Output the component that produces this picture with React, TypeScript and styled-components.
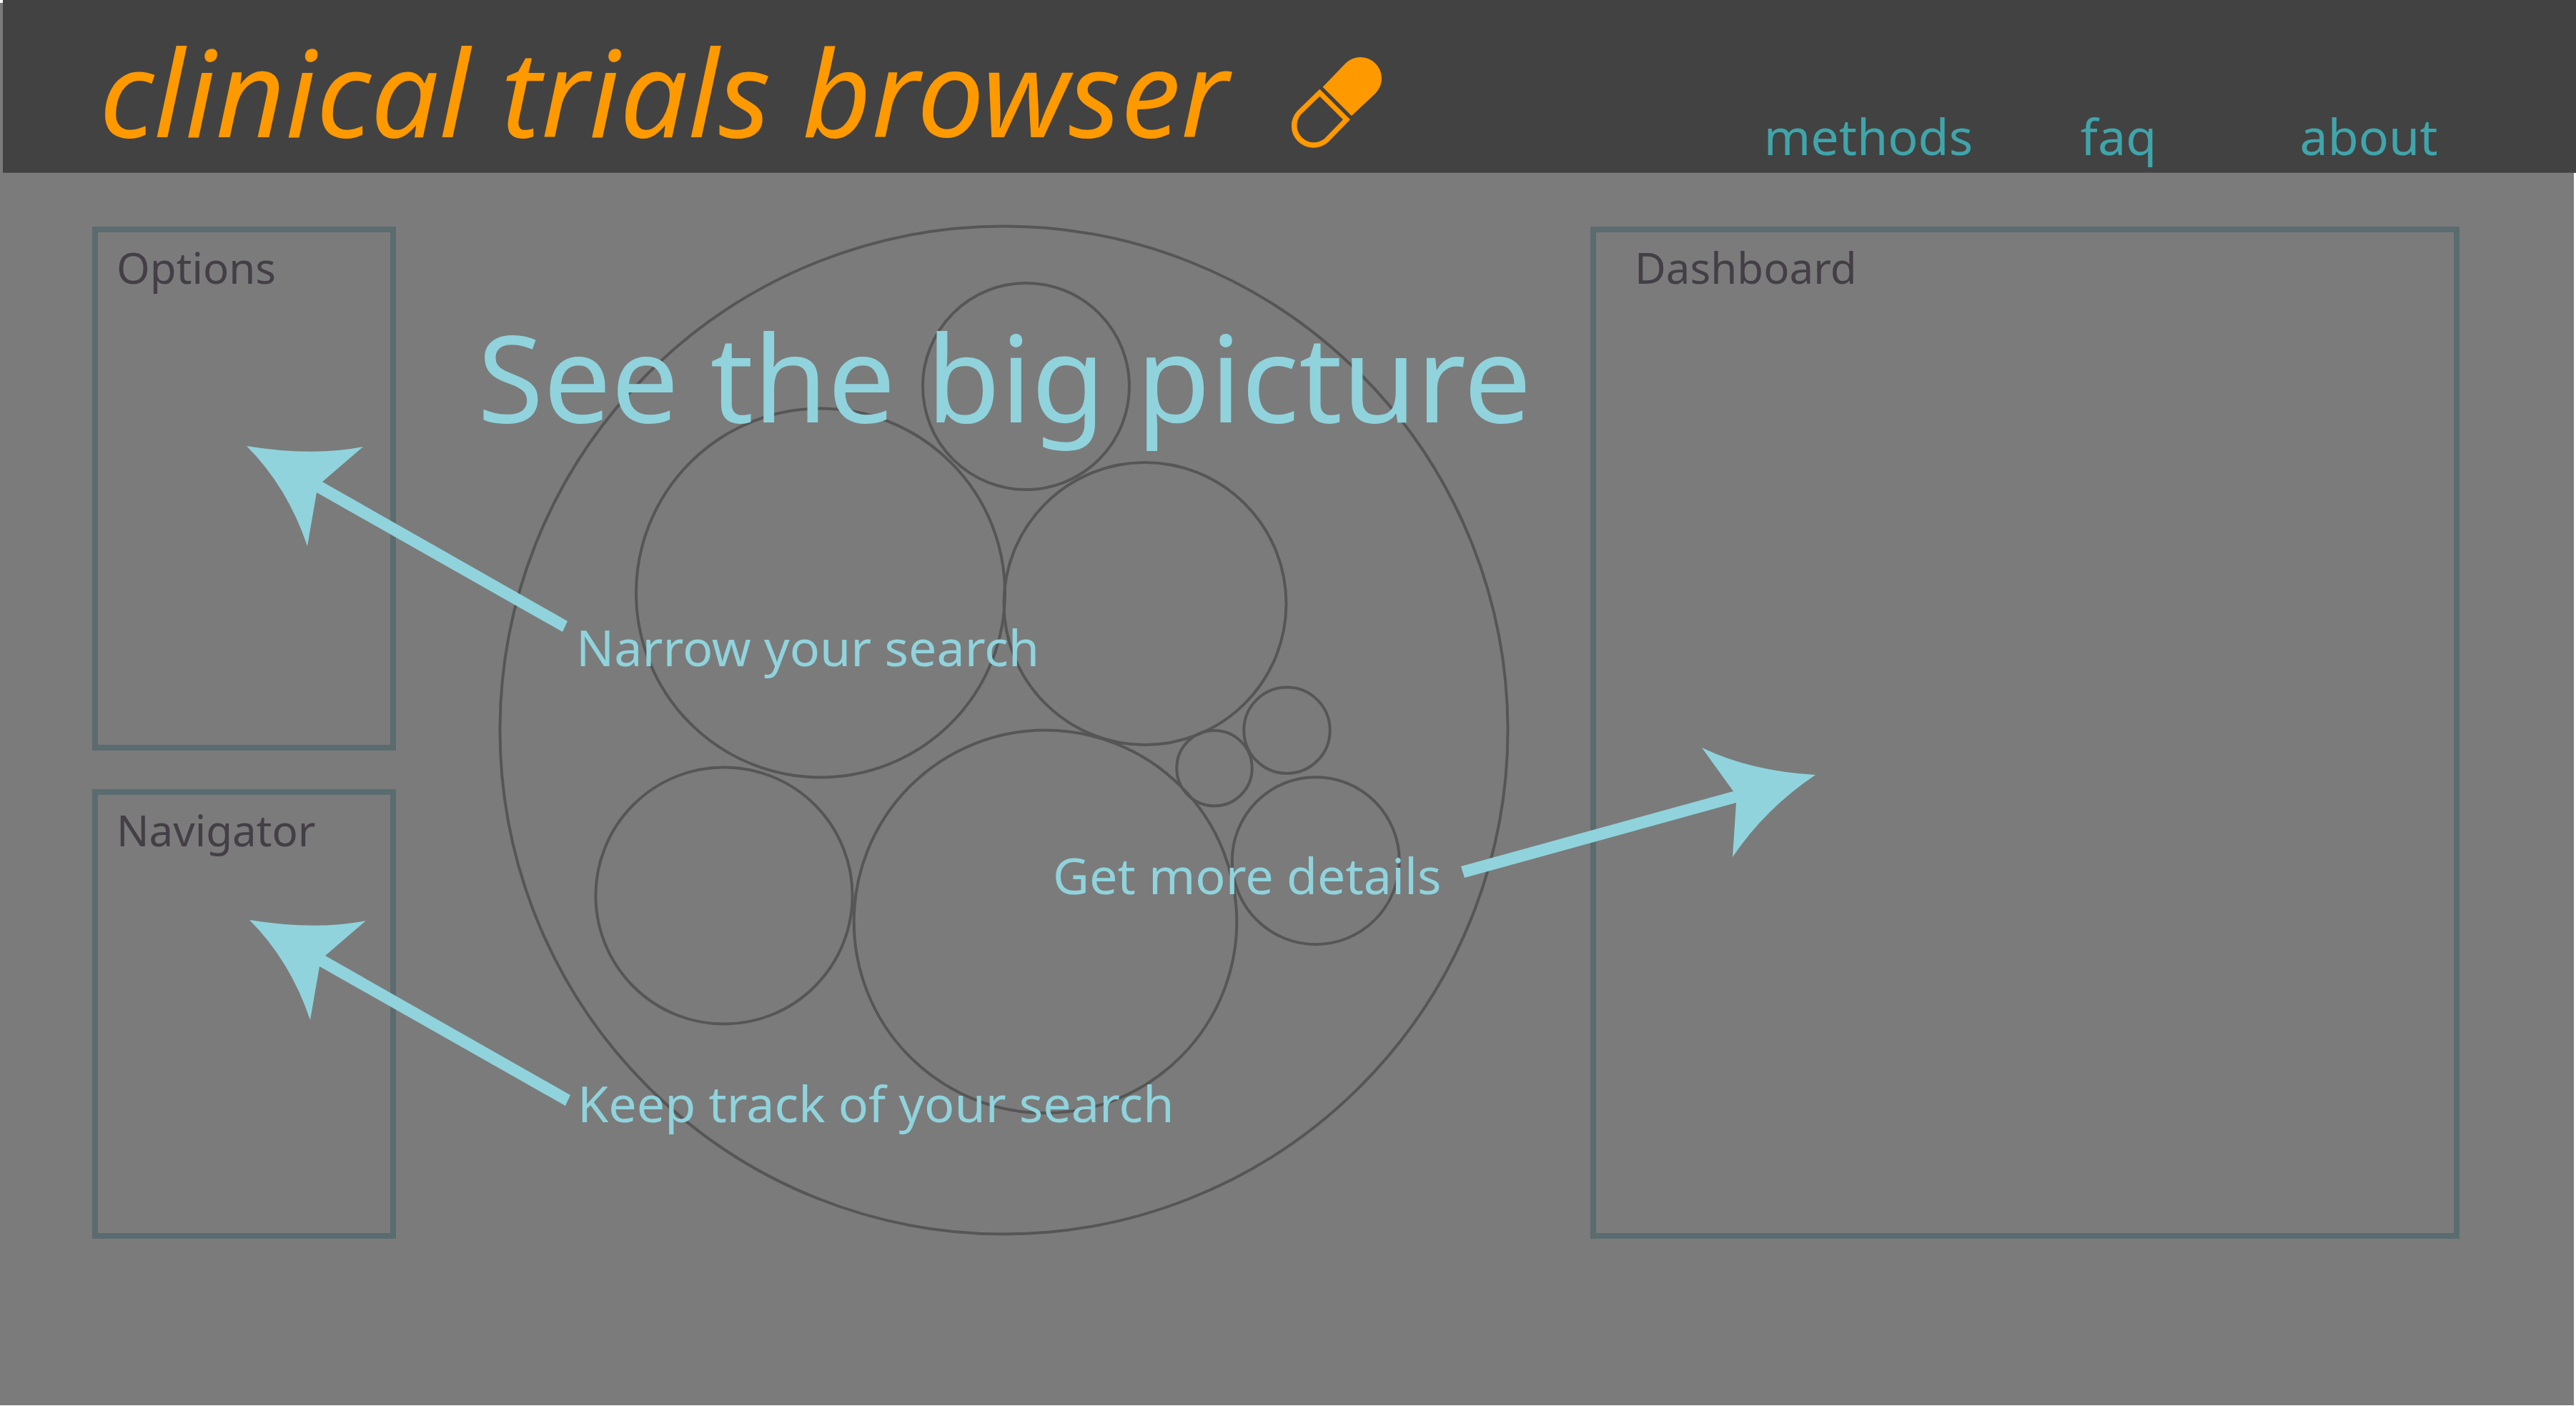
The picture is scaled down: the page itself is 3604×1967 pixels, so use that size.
import React from "react";
import styled, { createGlobalStyle } from "styled-components";

const color = {
  page: "#7b7b7b",
  bar: "#424242",
  barEdge: "#545454",
  brand: "#ff9900",
  link: "#3fa5ab",
  frame: "#5a6c6f",
  label: "#443e47",
  hint: "#90d3dc",
  ring: "#565656",
};

const GlobalStyle = createGlobalStyle`
  * { box-sizing: border-box; }
  body {
    margin: 0;
    background: #ffffff;
    font-family: "Noto Sans", "Open Sans", sans-serif;
  }
  h1, h2, p { margin: 0; font-weight: 400; }
`;

const Page = styled.div`
  display: flex;
  flex-direction: column;
  min-height: 100vh;
`;

const TopBarEdge = styled.div`
  position: relative;
  z-index: 1;
  padding-left: 4px;
  background: linear-gradient(#ffffff 4px, ${color.page} 4px);
`;

const TopBar = styled.header`
  display: flex;
  justify-content: space-between;
  align-items: flex-end;
  height: 241px;
  padding: 0 115px 0 135px;
  background: ${color.bar};
  box-shadow: 0 1px 0 ${color.barEdge};
`;

const Brand = styled.div`
  display: flex;
  align-items: flex-end;
  gap: 87px;
  padding-bottom: 6px;
`;

const Title = styled.h1`
  color: ${color.brand};
  font-size: 168px;
  line-height: 216px;
  font-style: italic;
  white-space: nowrap;
`;

const PillIcon = styled.svg`
  width: 127px;
  height: 128px;
  margin-bottom: 27px;
  fill: ${color.brand};
`;

const Nav = styled.nav`
  display: grid;
  grid-template-columns: repeat(3, 350px);
  justify-items: center;
  padding-bottom: 3px;
`;

const NavLink = styled.a`
  color: ${color.link};
  font-size: 70px;
  line-height: 96px;
  text-decoration: none;
`;

const Stage = styled.main`
  position: relative;
  flex: 1;
  display: grid;
  grid-template-columns: 425fr 1671fr 1216fr;
  align-content: start;
  margin: 0 3px 1px 0;
  padding: 76px 160px 0 129px;
  background: ${color.page};
`;

const Sidebar = styled.aside`
  display: grid;
  grid-template-rows: 733fr 629fr;
  gap: 54px;
`;

const Panel = styled.section<{ $inset?: number }>`
  padding: 7px ${(p) => p.$inset ?? 26}px;
  border: 8px solid ${color.frame};
`;

const PanelTitle = styled.h2`
  color: ${color.label};
  font-size: 60px;
  line-height: 84px;
`;

const Chart = styled.svg`
  display: block;
  width: calc(100% - 257px);
  margin: 0 113px 0 144px;
  overflow: visible;
  fill: none;
  stroke: ${color.ring};
  stroke-width: 4px;
`;

const Arrows = styled.svg`
  position: absolute;
  top: 0;
  left: 0;
  width: 100%;
  height: 100%;
  fill: ${color.hint};
  pointer-events: none;
`;

const Headline = styled.p`
  position: absolute;
  top: 171px;
  left: 668px;
  color: ${color.hint};
  font-size: 168px;
  line-height: 228px;
  white-space: nowrap;
`;

const Hint = styled.p<{ $x: number; $y: number }>`
  position: absolute;
  top: ${(p) => p.$y}px;
  left: ${(p) => p.$x}px;
  color: ${color.hint};
  font-size: 70px;
  line-height: 96px;
  white-space: nowrap;
`;

const rings = [
  { x: 1404.5, y: 1021.5, r: 705 },
  { x: 1435.5, y: 540.5, r: 144.5 },
  { x: 1148, y: 829.5, r: 258 },
  { x: 1602, y: 844.5, r: 197.5 },
  { x: 1800.5, y: 1021.7, r: 60.2 },
  { x: 1699, y: 1074.7, r: 52.7 },
  { x: 1840.8, y: 1204.2, r: 117 },
  { x: 1462.5, y: 1289.3, r: 267.8 },
  { x: 1013, y: 1253, r: 179.6 },
];

const leftArrow =
  "M345 383 Q437 398 508 384 L451 433 L794 628 L787 643 L443 448 L430 523 Q402 440 345 383Z";

export default function App() {
  return (
    <>
      <GlobalStyle />
      <Page>
        <TopBarEdge>
          <TopBar>
            <Brand>
              <Title>clinical trials browser</Title>
              <PillIcon viewBox="78 90 381 384" aria-hidden="true">
                <path d="M212 215 L307 116 A89 89 0 0 1 433 242 L333 336Z" />
                <path
                  fillRule="evenodd"
                  d="M199 224 L105 316 A92 92 0 0 0 235 446 L327 352Z M199 254 L297 352 L220 431 A71 71 0 0 1 120 331Z"
                />
              </PillIcon>
            </Brand>
            <Nav>
              <NavLink href="#methods">methods</NavLink>
              <NavLink href="#faq">faq</NavLink>
              <NavLink href="#about">about</NavLink>
            </Nav>
          </TopBar>
        </TopBarEdge>
        <Stage>
          <Sidebar>
            <Panel>
              <PanelTitle>Options</PanelTitle>
            </Panel>
            <Panel>
              <PanelTitle>Navigator</PanelTitle>
            </Panel>
          </Sidebar>
          <Chart viewBox="698 317 1414 1416" aria-hidden="true">
            {rings.map((c) => (
              <circle key={c.x} cx={c.x} cy={c.y} r={c.r} />
            ))}
          </Chart>
          <Panel $inset={54}>
            <PanelTitle>Dashboard</PanelTitle>
          </Panel>
          <Arrows aria-hidden="true">
            <path d={leftArrow} />
            <path d={leftArrow} transform="translate(4 663)" />
            <path d="M2540 843 Q2450 838 2381 805 L2425 866 L2044 971 L2049 987 L2429 882 L2424 958 Q2470 890 2540 843Z" />
          </Arrows>
          <Headline>See the big picture</Headline>
          <Hint $x={806} $y={616}>
            Narrow your search
          </Hint>
          <Hint $x={1473} $y={935}>
            Get more details
          </Hint>
          <Hint $x={808} $y={1254}>
            Keep track of your search
          </Hint>
        </Stage>
      </Page>
    </>
  );
}
